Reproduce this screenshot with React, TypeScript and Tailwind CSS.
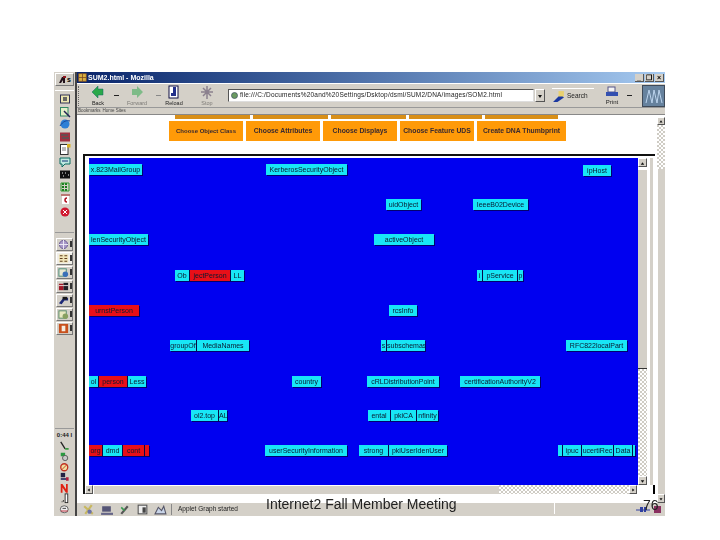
import type { ReactNode } from "react";

type Seg = { t: string; w: number; red?: boolean };
type Node = { x: number; y: number; segs: Seg[] };

// canvas origin is the top-left corner of the blue area
const nodes: Node[] = [
  { x: 0, y: 6, segs: [{ t: "x.823MailGroup", w: 53 }] },
  { x: 177, y: 6, segs: [{ t: "KerberosSecurityObject", w: 81 }] },
  { x: 494, y: 7, segs: [{ t: "ipHost", w: 28 }] },
  { x: 297, y: 41, segs: [{ t: "uidObject", w: 35 }] },
  { x: 384, y: 41, segs: [{ t: "IeeeB02Device", w: 55 }] },
  { x: 0, y: 76, segs: [{ t: "lenSecurityObject", w: 59 }] },
  { x: 285, y: 76, segs: [{ t: "activeObject", w: 60 }] },
  { x: 86, y: 112, segs: [{ t: "Ob", w: 14 }, { t: "jectPerson", w: 41, red: true }, { t: "LL", w: 14 }] },
  { x: 388, y: 112, segs: [{ t: "i", w: 5 }, { t: "pService", w: 35 }, { t: "p", w: 6 }] },
  { x: 0, y: 147, segs: [{ t: "urnstPerson", w: 50, red: true }] },
  { x: 300, y: 147, segs: [{ t: "rcsInfo", w: 28 }] },
  { x: 81, y: 182, segs: [{ t: "groupOf", w: 26 }, { t: "MediaNames", w: 53 }] },
  { x: 292, y: 182, segs: [{ t: "s", w: 5 }, { t: "subschemas", w: 39 }] },
  { x: 477, y: 182, segs: [{ t: "RFC822localPart", w: 61 }] },
  { x: 0, y: 218, segs: [{ t: "ol", w: 9 }, { t: "person", w: 29, red: true }, { t: "Less", w: 19 }] },
  { x: 203, y: 218, segs: [{ t: "country", w: 29 }] },
  { x: 278, y: 218, segs: [{ t: "cRLDistributionPoint", w: 72 }] },
  { x: 371, y: 218, segs: [{ t: "certificationAuthorityV2", w: 80 }] },
  { x: 102, y: 252, segs: [{ t: "ol2.top", w: 27 }, { t: "AL", w: 9 }] },
  { x: 279, y: 252, segs: [{ t: "ental", w: 22 }, { t: "pkiCA", w: 26 }, { t: "nfinity", w: 22 }] },
  { x: 0, y: 287, segs: [{ t: "org", w: 13, red: true }, { t: "dmd", w: 20 }, { t: "cont", w: 22, red: true }, { t: "", w: 5, red: true }] },
  { x: 176, y: 287, segs: [{ t: "userSecurityInformation", w: 82 }] },
  { x: 270, y: 287, segs: [{ t: "strong", w: 29 }, { t: "pkiUserIdenUser", w: 59 }] },
  { x: 469, y: 287, segs: [{ t: "", w: 4 }, { t: "ipuc", w: 19 }, { t: "ucertiRec", w: 32 }, { t: "Data", w: 19 }, { t: "", w: 3 }] },
];

const bars = [75, 75, 75, 73, 73];
const tabs = [
  { t: "Choose Object Class", w: 74, small: true },
  { t: "Choose Attributes", w: 74 },
  { t: "Choose Displays", w: 74 },
  { t: "Choose Feature UDS", w: 74 },
  { t: "Create DNA Thumbprint", w: 89 },
];

const checker =
  "bg-[conic-gradient(#ffffff_25%,#cfccc4_0_50%,#ffffff_0_75%,#cfccc4_0)] bg-[length:4px_4px]";

function Ico({ size = 12, children }: { size?: number; children: ReactNode }) {
  return (
    <svg width={size} height={size} viewBox="0 0 12 12" className="shrink-0">
      {children}
    </svg>
  );
}

function ScrollBtn({ dir, className = "" }: { dir: "up" | "down" | "left" | "right"; className?: string }) {
  const pts = { up: "4,3 2,6 6,6", down: "2,3 6,3 4,6", left: "5,2 5,6 2,4", right: "3,2 3,6 6,4" }[dir];
  return (
    <div className={`shrink-0 bg-[#d4d0c8] border border-t-white border-l-white border-r-[#555] border-b-[#555] flex items-center justify-center ${className}`}>
      <svg width="8" height="8" viewBox="0 0 8 8">
        <polygon points={pts} fill="#111" />
      </svg>
    </div>
  );
}

function Side1() {
  return (
    <>
      <Ico><rect x="1.5" y="2" width="9" height="8" fill="#ece6b0" stroke="#335" /><rect x="4" y="4" width="4" height="4" fill="#666" /></Ico>
      <Ico><rect x="1.5" y="1.5" width="7.5" height="8.5" fill="#e4f0c8" stroke="#386" /><path d="M5 5l6 6" stroke="#225" strokeWidth="1.5" /></Ico>
      <Ico><circle cx="6" cy="6" r="4.5" fill="#2d7fd6" /><path d="M1 8C4 3 8 2 11 3" stroke="#1a4a9a" fill="none" /></Ico>
      <Ico><rect x="1" y="1.5" width="10" height="9" fill="#a03040" /><path d="M2 4h7M3 7h7" stroke="#555" strokeWidth="1.5" /></Ico>
      <Ico><rect x="1.5" y="1.5" width="7.5" height="10" fill="#fff" stroke="#333" /><path d="M3 5h4M3 7h4" stroke="#777" /><rect x="8" y="1" width="3.5" height="3.5" fill="#d8b020" /></Ico>
      <Ico><path d="M1 2h10v6H6l-3 3V8H1z" fill="#bfe8e0" stroke="#0a6a60" /><path d="M3 5h6" stroke="#137" /></Ico>
      <Ico><rect x="1" y="2.5" width="10" height="8" fill="#111" /><path d="M3 5h1M6 5h1M9 7h1M4 8h1" stroke="#eee" /></Ico>
    </>
  );
}

const sideBtns: ReactNode[] = [
  <><circle cx="6" cy="6" r="4.5" fill="#a898c8" stroke="#6a5a90" /><path d="M6 1v10M1 6h10" stroke="#f0eef8" /></>,
  <><rect x="1" y="1.5" width="10" height="9" fill="#f0e4b8" /><path d="M2 3h3M7 3h3M2 6h3M7 6h3M2 9h3M7 9h3" stroke="#604020" strokeWidth="1.2" /></>,
  <><rect x="1" y="2" width="8" height="8" fill="#e8e8d0" stroke="#487" /><circle cx="8" cy="8" r="3" fill="#3a70b8" /></>,
  <><rect x="1" y="3" width="5" height="7" fill="#a01828" /><rect x="6" y="2" width="5" height="8" fill="#202028" /><path d="M1 5h10" stroke="#e8e0e0" /></>,
  <><path d="M1 9l5-6h5v3H7l-3 4z" fill="#1e2a78" /><rect x="5" y="2" width="5" height="3" fill="#181818" /></>,
  <><rect x="1" y="2" width="8" height="8" fill="#e8e8c0" stroke="#586" /><circle cx="8" cy="8" r="3" fill="#88a060" /></>,
  <><rect x="1" y="1" width="10" height="10" fill="#c8501c" /><path d="M4 3h4v6H4z" fill="#f4ece0" /></>,
];

function Sidebar() {
  return (
    <div className="w-[23px] h-full shrink-0 bg-[#d4d0c8] border-r-2 border-[#444] flex flex-col items-center">
      <div className="mt-[1px] h-[13px] w-[19px] bg-[#cfcbc3] border border-t-white border-l-white border-r-[#777] border-b-[#777] flex items-center justify-center text-[7px] font-bold leading-none text-black">
        <svg width="9" height="9" viewBox="0 0 9 9"><path d="M1 8l3-6h3v6H5V5L3 8z" fill="#201018" /><path d="M5 1h3v2H5z" fill="#901820" /></svg>s
      </div>
      <div className="mt-[4px] h-px w-[19px] bg-white" />
      <div className="mt-[2px] flex flex-col gap-[0.5px] items-center">
        <Side1 />
        <Ico><path d="M3 2h2v2H3zM6 2h2v2H6zM3 5h2v2H3zM6 5h2v2H6zM3 8h2v2H3zM6 8h2v2H6z" fill="#1a7a20" /><path d="M2 2h8v8H2z" fill="none" stroke="#2f9a30" /></Ico>
        <Ico><path d="M2 2h9" stroke="#a02020" /><rect x="3" y="3" width="7" height="8" fill="#fff" /><path d="M8 5a2 2 0 1 0 0 4" stroke="#b01020" fill="none" strokeWidth="1.5" /></Ico>
        <Ico><circle cx="6" cy="6" r="4.5" fill="#d01830" /><path d="M4 4l4 4M8 4l-4 4" stroke="#fff" /></Ico>
      </div>
      <div className="mt-[14px] h-px w-[19px] bg-[#999]" />
      <div className="mt-[5px] flex flex-col gap-[1px] items-center">
        {sideBtns.map((icon, i) => (
          <div key={i} className={`h-[13px] w-[17px] border border-t-white border-l-white border-r-[#777] border-b-[#777] flex items-center pl-[1px] ${i === 1 ? "bg-[#f0eee8]" : "bg-[#d4d0c8]"}`}>
            <Ico size={11}>{icon}</Ico>
            <span className="ml-[1px] h-[6px] w-[2px] bg-[#333] block" />
          </div>
        ))}
      </div>
      <div className="mt-auto mb-[2px] flex flex-col items-center">
        <div className="h-px w-[19px] bg-[#999] mb-[2px]" />
        <div className="text-[6px] leading-[9px] text-[#222] font-bold whitespace-nowrap">0:44 I</div>
        <div className="mt-[1px] flex flex-col items-center">
          <Ico size={10.5}><path d="M2 1l5 8" stroke="#222" strokeWidth="1.5" /><path d="M7 8h4v2H7z" fill="#3a9a40" /></Ico>
          <Ico size={10.5}><rect x="2" y="2" width="5" height="4" fill="#2a9a40" /><circle cx="7" cy="8" r="3" fill="#c8c8c8" stroke="#555" /></Ico>
          <Ico size={10.5}><circle cx="6" cy="6" r="4" fill="#f0e0a0" stroke="#c03020" strokeWidth="1.5" /><path d="M3 9l6-6" stroke="#c03020" /></Ico>
          <Ico size={10.5}><rect x="2" y="1" width="5" height="5" fill="#224" /><path d="M2 8h8" stroke="#336" strokeWidth="2" /><rect x="8" y="6" width="3" height="4" fill="#b02040" /></Ico>
          <Ico size={10.5}><path d="M2 11V1h2l4 6V1h2v10H8L4 5v6z" fill="#e02010" /></Ico>
          <Ico size={10.5}><path d="M3 10h1M5 10V8" stroke="#222" /><rect x="7" y="1" width="3" height="10" fill="#fff" stroke="#222" /></Ico>
          <Ico size={10.5}><ellipse cx="6" cy="6" rx="4.5" ry="4" fill="#eee" stroke="#555" /><path d="M2 8h8" stroke="#c02030" /><path d="M4 5h4" stroke="#333" /></Ico>
        </div>
      </div>
    </div>
  );
}

function ToolBtn({ label, faded, children }: { label: string; faded?: boolean; children: ReactNode }) {
  return (
    <div className={`w-[26px] shrink-0 flex flex-col items-center ${faded ? "opacity-50" : ""}`}>
      <svg width="16" height="15" viewBox="0 0 16 15">{children}</svg>
      <span className="text-[5.5px] leading-[7px] text-[#222] whitespace-nowrap">{label}</span>
    </div>
  );
}

function Toolbar() {
  return (
    <div className="h-[25px] shrink-0 bg-[#d4d0c8] border-y border-t-white border-b-[#999] flex items-center relative">
      <div className="ml-[1px] h-[20px] w-[2px] border-l border-dotted border-[#666]" />
      <div className="ml-[5px] flex items-center">
        <ToolBtn label="Back">
          <path d="M2 7l6-6v3h5v6H8v3z" fill="#2aa84a" stroke="#166" strokeWidth="0.5" />
        </ToolBtn>
        <span className="ml-[3px] mr-[5px] w-[5px] h-px bg-[#222]" />
        <ToolBtn label="Forward" faded>
          <path d="M14 7L8 1v3H3v6h5v3z" fill="#2aa84a" />
        </ToolBtn>
        <span className="ml-[6px] w-[5px] h-px bg-[#888]" />
        <ToolBtn label="Reload">
          <rect x="3" y="1" width="9" height="12" fill="#fff" stroke="#114" />
          <path d="M7 2h3v9H5V8h2z" fill="#23308a" />
        </ToolBtn>
        <div className="w-[7px]" />
        <ToolBtn label="Stop" faded>
          <path d="M8 1v13M2 7h12M4 3l8 8M12 3l-8 8" stroke="#443355" strokeWidth="1.5" />
        </ToolBtn>
      </div>
      <div className="ml-[8px] h-[13px] w-[306px] bg-white border border-t-[#555] border-l-[#555] border-b-[#ddd] border-r-[#ddd] flex items-center pl-[1px] gap-[1px] overflow-hidden">
        <Ico size={9}><circle cx="6" cy="6" r="4" fill="#6a9a60" stroke="#456" /></Ico>
        <span className="text-[6.5px] leading-none text-[#222] whitespace-nowrap tracking-[0.2px]">file:///C:/Documents%20and%20Settings/Dsktop/dsml/SUM2/DNA/images/SOM2.html</span>
      </div>
      <ScrollBtn dir="down" className="ml-[1px] h-[13px] w-[10px]" />
      <div className="ml-[7px] flex items-center gap-[2px] border-t border-white pt-[1px] w-[42px]">
        <Ico size={13}><path d="M1 11L8 4l3 3-6 4z" fill="#1a38a0" /><rect x="6" y="1" width="5" height="5" fill="#e8d070" /></Ico>
        <span className="text-[6.5px] text-[#222] leading-none">Search</span>
      </div>
      <div className="ml-[7px] flex flex-col items-center w-[22px]">
        <svg width="14" height="13" viewBox="0 0 14 13">
          <rect x="3" y="1" width="7" height="5" fill="#f4f4f4" stroke="#558" />
          <path d="M1 6h12v4H1z" fill="#3450b0" />
        </svg>
        <span className="text-[6px] leading-[7px] text-[#222]">Print</span>
      </div>
      <span className="ml-[4px] w-[5px] h-px bg-[#222]" />
      <div className="absolute right-0 top-[1px] h-[22px] w-[23px] bg-[#66829e] border border-[#3f4a58] flex items-center justify-center">
        <svg width="18" height="15" viewBox="0 0 18 15" fill="none" stroke="#bcd4ee" strokeWidth="1">
          <path d="M1 14L4 1l3 13 2-13 3 13 2-13 3 13" />
        </svg>
      </div>
    </div>
  );
}

function Canvas() {
  return (
    <div className="relative flex-1 bg-[#0000f0] overflow-hidden">
      {nodes.map((n) => (
        <div key={`${n.x}-${n.y}`} className="absolute flex h-[11px] shadow-[1px_1px_0_#000070]" style={{ left: n.x, top: n.y }}>
          {n.segs.map((s, i) => (
            <div
              key={`${s.t}-${i}`}
              className={`h-full overflow-hidden text-center text-[7px] leading-[11px] whitespace-nowrap text-[#0a1a30] ${s.red ? "bg-[#e80f18]" : "bg-[#18e6f6]"} ${i > 0 ? "border-l border-[#08084a]" : ""}`}
              style={{ width: s.w }}
            >
              {s.t}
            </div>
          ))}
        </div>
      ))}
    </div>
  );
}

function Frame() {
  return (
    <div className="ml-[6px] h-[340px] border-t-2 border-l-2 border-[#111] pt-[2px] pl-[4px] flex flex-col bg-white w-[572px]">
      <div className="flex flex-1 min-h-0">
        <Canvas />
        {/* inner vertical scrollbar */}
        <div className="w-[9px] shrink-0 flex flex-col">
          <ScrollBtn dir="up" className="h-[9px] w-[9px]" />
          <div className="h-[2px]" />
          <div className="h-[200px] bg-[#d4d0c8] border-b border-[#333] border-t border-t-white" />
          <div className={`flex-1 ${checker}`} />
          <ScrollBtn dir="down" className="h-[9px] w-[9px]" />
        </div>
        <div className="w-[6px] shrink-0 flex">
          <div className="w-[3px] bg-white" />
          <div className="w-[3px] bg-[#d4d0c8]" />
        </div>
        <div className="w-[2px] shrink-0 bg-white" />
      </div>
      <div className="h-[9px] shrink-0 flex -ml-[4px] items-stretch">
        <div className="w-[552px] shrink-0 flex items-stretch">
          <ScrollBtn dir="left" className="w-[8px]" />
          <div className="w-[406px] bg-[#d4d0c8] border-t border-white border-l" />
          <div className={`flex-1 ${checker}`} />
          <ScrollBtn dir="right" className="w-[8px]" />
        </div>
        <div className="ml-[16px] w-[2px] bg-black" />
      </div>
    </div>
  );
}

export default function App() {
  return (
    <div className="w-[720px] h-[540px] bg-white pt-[72px] pl-[54px] overflow-hidden font-['Liberation_Sans',Arial,sans-serif]">
      <div className="relative w-[611px] h-[444px] flex">
        <div className="flex w-full h-full blur-[0.35px]">
          <Sidebar />
          <div className="flex-1 min-w-0 flex flex-col">
            <div className="h-[11px] shrink-0 flex items-center bg-gradient-to-r from-[#0a246a] to-[#a6caf0] pl-[1px] text-white">
              <Ico size={9}><rect x="1" y="1" width="10" height="10" fill="#d8b040" stroke="#852" /><path d="M1 6h10M6 1v10" stroke="#742" /></Ico>
              <span className="ml-[1px] text-[7px] font-bold leading-none whitespace-nowrap">SUM2.html - Mozilla</span>
              <div className="ml-auto mr-[1px] flex gap-[1px]">
                {["_", "❐", "×"].map((g) => (
                  <span key={g} className="h-[8px] w-[9px] bg-[#d4d0c8] text-[7px] leading-[8px] text-center text-black font-bold border-r border-b border-[#555]">{g}</span>
                ))}
              </div>
            </div>
            <Toolbar />
            <div className="h-[7px] shrink-0 bg-[#d4d0c8] border-b border-[#888] flex items-center text-[4.5px] text-[#444] leading-none pl-[1px] gap-[2px] whitespace-nowrap">
              <span>Bookmarks</span>
              <span>Home Sites</span>
            </div>
            <div className="h-[388px] shrink-0 flex bg-white">
              <div className="w-[580px] shrink-0 flex flex-col">
                <div className="h-[39px] shrink-0">
                  <div className="h-[4px] pl-[98px] flex gap-[3px]">
                    {bars.map((w, i) => (
                      <div key={i} className="h-full bg-[#d88f18]" style={{ width: w }} />
                    ))}
                  </div>
                  <div className="mt-[2px] pl-[92px] flex gap-[3px]">
                    {tabs.map((t) => (
                      <div
                        key={t.t}
                        className={`h-[20px] bg-[#ff9a08] flex items-center justify-center font-bold leading-none text-[#3a2a30] whitespace-nowrap overflow-hidden ${t.small ? "text-[6px]" : "text-[6.8px]"}`}
                        style={{ width: t.w }}
                      >
                        {t.t}
                      </div>
                    ))}
                  </div>
                </div>
                <Frame />
              </div>
              <div className="w-[8px] shrink-0 flex flex-col pt-[2px]">
                <ScrollBtn dir="up" className="h-[8px] w-[8px]" />
                <div className={`h-[44px] ${checker}`} />
                <div className="flex-1 bg-[#d4d0c8] border-l border-white" />
                <ScrollBtn dir="down" className="h-[9px] w-[8px]" />
              </div>
            </div>
            <div className="h-[13px] shrink-0 bg-[#d4d0c8] flex items-center relative">
              <div className="ml-[5px] flex items-center gap-[5px]">
                <Ico size={13}><path d="M2 3l8 7M9 2L3 10" stroke="#c8b860" strokeWidth="2" /><circle cx="7" cy="8" r="2" fill="#6a70a8" /></Ico>
                <Ico size={13}><rect x="2" y="3" width="8" height="5" fill="#557" /><path d="M1 10h11" stroke="#668" strokeWidth="2" /></Ico>
                <Ico size={13}><path d="M3 10l6-7" stroke="#555" strokeWidth="2" /><path d="M3 4l3 3" stroke="#3a9a50" strokeWidth="1.5" /></Ico>
                <Ico size={13}><rect x="2" y="2" width="8" height="8" fill="#eee" stroke="#555" /><rect x="6" y="4" width="3" height="5" fill="#444" /></Ico>
                <Ico size={13}><path d="M1 10l3-6 3 3 2-4 2 7z" fill="#c8d4e8" stroke="#556" /></Ico>
              </div>
              <div className="ml-[4px] h-[11px] w-px bg-[#888]" />
              <span className="ml-[6px] text-[6.5px] leading-none text-[#222] whitespace-nowrap">Applet Graph started</span>
              <div className="absolute left-[477px] top-0 h-[11px] w-px bg-white" />
              <div className="absolute right-[15px] top-[2px]">
                <svg width="14" height="9" viewBox="0 0 14 9"><path d="M0 5h14" stroke="#3040a0" /><rect x="4" y="2" width="3" height="5" fill="#3040a0" /><rect x="8" y="2" width="2" height="5" fill="#3040a0" /></svg>
              </div>
              <div className="absolute right-[4px] top-[3px] h-[7px] w-[7px] bg-[#8a3060]" />
            </div>
          </div>
        </div>
        <span className="absolute left-[212px] top-[424px] text-[14px] leading-[16px] text-[#222] whitespace-nowrap">Internet2 Fall Member Meeting</span>
        <span className="absolute left-[589px] top-[425px] text-[14px] leading-[16px] text-[#222]">76</span>
      </div>
    </div>
  );
}
